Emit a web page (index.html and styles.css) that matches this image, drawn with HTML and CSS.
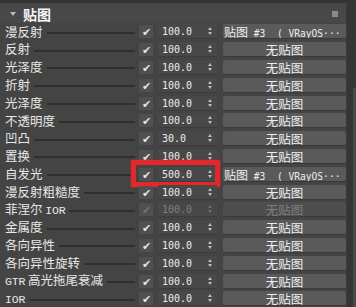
FILE: index.html
```html
<!DOCTYPE html>
<html lang="zh">
<head>
  <meta charset="UTF-8">
  <title>贴图</title>
  <link rel="stylesheet" href="styles.css">
</head>
<body>
  <div class="panel">
    <div class="rollout-head">
      <span class="arrow"></span>
      <span class="title">贴图</span>
      <span class="grip"></span>
    </div>

    <div class="rows">
      <div class="row"><span class="label">漫反射</span><span class="line"></span><span class="check">✔</span><span class="num">100.0<i class="spin"></i></span><span class="map map-set">贴图<span class="ref"> #3  ( VRayOS···</span></span></div>
      <div class="row"><span class="label">反射</span><span class="line"></span><span class="check">✔</span><span class="num">100.0<i class="spin"></i></span><span class="map">无贴图</span></div>
      <div class="row"><span class="label">光泽度</span><span class="line"></span><span class="check">✔</span><span class="num">100.0<i class="spin"></i></span><span class="map">无贴图</span></div>
      <div class="row"><span class="label">折射</span><span class="line"></span><span class="check">✔</span><span class="num">100.0<i class="spin"></i></span><span class="map">无贴图</span></div>
      <div class="row"><span class="label">光泽度</span><span class="line"></span><span class="check">✔</span><span class="num">100.0<i class="spin"></i></span><span class="map">无贴图</span></div>
      <div class="row"><span class="label">不透明度</span><span class="line"></span><span class="check">✔</span><span class="num">100.0<i class="spin"></i></span><span class="map">无贴图</span></div>
      <div class="row"><span class="label">凹凸</span><span class="line"></span><span class="check">✔</span><span class="num">30.0<i class="spin"></i></span><span class="map">无贴图</span></div>
      <div class="row"><span class="label">置换</span><span class="line"></span><span class="check">✔</span><span class="num">100.0<i class="spin"></i></span><span class="map">无贴图</span></div>
      <div class="row marked"><span class="label">自发光</span><span class="line"></span><span class="check">✔</span><span class="num">500.0<i class="spin"></i></span><span class="map map-set">贴图<span class="ref"> #3  ( VRayOS···</span></span><span class="highlight"></span></div>
      <div class="row"><span class="label">漫反射粗糙度</span><span class="line"></span><span class="check">✔</span><span class="num">100.0<i class="spin"></i></span><span class="map">无贴图</span></div>
      <div class="row disabled"><span class="label">菲涅尔 <span class="latin">IOR</span></span><span class="line"></span><span class="check">✔</span><span class="num">100.0<i class="spin"></i></span><span class="map">无贴图</span></div>
      <div class="row"><span class="label">金属度</span><span class="line"></span><span class="check">✔</span><span class="num">100.0<i class="spin"></i></span><span class="map">无贴图</span></div>
      <div class="row"><span class="label">各向异性</span><span class="line"></span><span class="check">✔</span><span class="num">100.0<i class="spin"></i></span><span class="map">无贴图</span></div>
      <div class="row"><span class="label">各向异性旋转</span><span class="line"></span><span class="check">✔</span><span class="num">100.0<i class="spin"></i></span><span class="map">无贴图</span></div>
      <div class="row"><span class="label"><span class="latin">GTR</span> 高光拖尾衰减</span><span class="line"></span><span class="check">✔</span><span class="num">100.0<i class="spin"></i></span><span class="map">无贴图</span></div>
      <div class="row"><span class="label"><span class="latin">IOR</span></span><span class="line"></span><span class="check">✔</span><span class="num">100.0<i class="spin"></i></span><span class="map">无贴图</span></div>
    </div>
  </div>
  <div class="scroll-track"><span class="scroll-thumb"></span></div>
</body>
</html>
```

FILE: styles.css
```css
body {
  margin: 0;
  display: flex;
  background-color: #353535;
  font-family: "Noto Sans CJK SC", "Noto Sans", sans-serif;
  overflow: hidden;
}

.panel {
  width: 347px;
  height: 307px;
  flex-shrink: 0;
  background-color: #444444;
  border-top: 3px solid #343434;
  box-sizing: border-box;
  border-right: 1px solid #3a3a3a;
}

.scroll-track {
  flex: 1;
  height: 307px;
  padding-top: 88px;
  padding-left: 6px;
  box-sizing: border-box;
}

.scroll-thumb {
  display: block;
  height: 219px;
  background-color: #4a4a4a;
}

.rollout-head {
  display: flex;
  align-items: center;
  height: 19px;
  margin-top: 1px;
  padding-left: 10px;
  padding-right: 8px;
  background-color: #484848;
}

.arrow {
  width: 0;
  height: 0;
  border-left: 3px solid transparent;
  border-right: 3px solid transparent;
  border-top: 4px solid #b8b8b8;
  margin-right: 7px;
}

.title {
  color: #f6f6f6;
  font-weight: bold;
  font-size: 14px;
}

.grip {
  margin-left: auto;
  width: 6px;
  height: 6px;
  background-image: radial-gradient(circle, #8a8a8a 0.8px, transparent 1px);
  background-size: 2px 2px;
}

.row {
  position: relative;
  display: flex;
  align-items: center;
  height: 17.8px;
  font-size: 12.5px;
  color: #e8e8e8;
}

.label {
  padding-left: 5px;
  white-space: nowrap;
  line-height: 1;
}

.latin {
  font-family: "Liberation Mono", monospace;
  font-size: 11.5px;
  letter-spacing: -0.2px;
}

.line {
  flex: 1;
  height: 2px;
  background-color: #2f2f2f;
  margin: 2px 4px 0 4px;
}

.check {
  width: 14px;
  height: 13px;
  margin-right: 5px;
  background-color: #505050;
  color: #e2e2e2;
  font-size: 11px;
  line-height: 13px;
  text-align: center;
}

.num {
  position: relative;
  width: 59px;
  height: 15px;
  box-sizing: border-box;
  padding-left: 4px;
  background-color: #484848;
  border-bottom: 1px solid #3c3c3c;
  color: #ececec;
  font-family: "DejaVu Sans Mono", monospace;
  font-size: 10px;
  line-height: 15px;
  margin-right: 6px;
}

.spin {
  position: absolute;
  right: 5px;
  top: 3px;
  width: 0;
  height: 0;
  border-left: 2px solid transparent;
  border-right: 2px solid transparent;
  border-bottom: 3px solid #bdbdbd;
}

.spin::after {
  content: "";
  position: absolute;
  left: -2px;
  top: 5px;
  border-left: 2px solid transparent;
  border-right: 2px solid transparent;
  border-top: 3px solid #bdbdbd;
}

.map {
  width: 123px;
  height: 15px;
  box-sizing: border-box;
  background-color: #5a5a5a;
  border-radius: 2px;
  border-bottom: 1px solid #3a3a3a;
  color: #eeeeee;
  font-size: 12.5px;
  line-height: 15px;
  text-align: center;
  white-space: nowrap;
}

.map-set {
  text-align: left;
  padding-left: 1px;
  font-size: 12px;
  overflow: hidden;
}

.ref {
  font-family: "DejaVu Sans Mono", monospace;
  font-size: 9.6px;
  white-space: pre;
}

.disabled .num,
.disabled .map {
  color: #7e7e7e;
}

.disabled .check {
  color: #747474;
}

.disabled .map {
  background-color: #4e4e4e;
}

.disabled .spin,
.disabled .spin::after {
  border-bottom-color: #707070;
  border-top-color: #707070;
}

.highlight {
  position: absolute;
  left: 131px;
  top: -5px;
  width: 89px;
  height: 27px;
  box-sizing: border-box;
  border: 5px solid #e3282b;
  box-shadow: 0 0 2px rgba(227, 40, 43, 0.6);
}
```
